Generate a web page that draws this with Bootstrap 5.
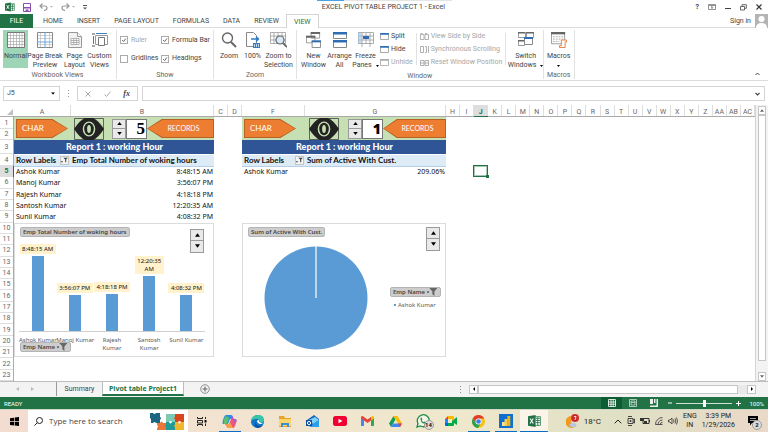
<!DOCTYPE html>
<html lang="en">
<head>
<meta charset="utf-8">
<meta name="viewport" content="width=device-width, initial-scale=1">
<title>EXCEL PIVOT TABLE PROJECT 1 - Excel</title>
<link href="https://cdn.jsdelivr.net/npm/bootstrap@5.3.0/dist/css/bootstrap.min.css" rel="stylesheet">
<style>
:root{--xl:#217346;--line:#d4d4d4;--cols:57px 143px 14px 14px 63px 141px repeat(22,minmax(0,1fr));--rows:12px 11px 14px 12px repeat(19,minmax(0,1fr))}
body{font:7px/9px Roboto,"Open Sans",sans-serif;color:#444;background:#fff;overflow:hidden}
svg{display:block;flex:none}
button,input{font:inherit;color:inherit}
button{border:0;background:none;padding:0}
a{color:inherit;text-decoration:none}
/* title bar and tabs */
.titlebar{height:14px;position:relative;padding:0 6px 0 5px}
.topstrip{position:absolute;top:0;left:317px;width:135px;height:1px;background:linear-gradient(90deg,#4aa0e6 27px,#e4e4e4 27px)}
.doctitle{padding-right:16px}
.wincaps{gap:9px}
.tabrow{height:14px;box-shadow:inset 0 -1px #dcdcdc}
.rtab{padding:0 7px;line-height:14px;height:14px}
.rtab.file-tab{background:var(--xl);color:#fff;width:33px;padding:0;text-align:center;margin-right:3px}
.rtab.on{color:var(--xl);border:1px solid var(--line);border-bottom:0;background:#fff;padding:0 7px}
.avatar{width:13px;height:14px;background:#b4b4b4}
/* ribbon */
.ribbon{height:53px;border-bottom:1px solid #dcdcdc;padding:2px 0 0 3px}
.rgroup{border-right:1px solid #e2e2e2;height:49px}
.rgroup .glabel{color:#666;height:9px;margin-top:3px;text-align:center}
.rbtn{display:flex;flex-direction:column;align-items:center;height:38px;padding-top:2px;white-space:nowrap}
.rbtn svg{margin-bottom:4px}
.rbtn.on{background:#9fd5b7}
.w22{width:22px}.w25{width:25px}.w27{width:27px}.w30{width:30px}.w34{width:34px}
.off{color:#a6a6a6}
.chk{display:flex;align-items:center;gap:3px;height:18px;white-space:nowrap}
.chk input{appearance:none;width:8px;height:8px;border:1px solid #ababab;margin:0;background:#fff;flex:none}
.chk input:checked{background:url("data:image/svg+xml,%3Csvg xmlns='http://www.w3.org/2000/svg' viewBox='0 0 8 8'%3E%3Cpath d='M1.5 4l2 2 3-4' fill='none' stroke='%23555' stroke-width='1.2'/%3E%3C/svg%3E")}
.showgrid{display:grid;grid-template-columns:41px 48px;padding:1px 4px 0 3px;height:38px}
.smallbtn{display:flex;align-items:center;gap:2px;height:13px;white-space:nowrap}
.smallset{padding-left:2px}
.vsep{width:1px;height:32px;background:#e2e2e2;margin:3px 3px 0}
.winrow .off .smallbtn{width:82px}
/* formula bar */
.fbar{padding:5px 3px 4px}
.fbox{height:15px;border:1px solid var(--line);background:#fff}
.namebox{width:57px}
.namebox input,.finput input{border:0;padding:0 3px;width:100%;min-width:0;outline:0;background:none}
.fxbox{width:61px;padding:0 7px}
.fxbtn{font-family:"Liberation Serif",serif;font-size:8px}
/* worksheet */
.sheet{display:grid;grid-template:12px minmax(0,1fr)/14px minmax(0,1fr)}
.corner{border-bottom:1px solid #ababab;position:relative}
.corner svg{margin:4px 0 0 7px}
.colheads{display:grid;grid-template-columns:var(--cols);border-bottom:1px solid #ababab}
.colheads span{border-right:1px solid #dedede;text-align:center;line-height:14px;height:11px;color:#666}
.rowheads{display:grid;grid-template-rows:var(--rows);border-right:1px solid #ababab}
.rowheads span{border-bottom:1px solid #dedede;display:flex;align-items:center;justify-content:center;color:#666;min-height:0;line-height:10px}
.colheads .cur{background:#dedede;color:var(--xl);font-weight:700;box-shadow:0 1px var(--xl)}
.rowheads .cur{background:#dedede;color:var(--xl);font-weight:700;box-shadow:1px 0 var(--xl)}
.cells{display:grid;grid-template-columns:var(--cols);grid-template-rows:var(--rows);font-family:"Noto Sans","Open Sans",sans-serif;color:#111}
.at-a{grid-column:1/3}.at-f{grid-column:5/7}
.banner{grid-row:1/3;background:#c6e0b4;padding:1px 0 1px 2px}
.arrow{position:relative;isolation:isolate;height:19px;background:#b86125;color:#fff;font-family:Lato,sans-serif;font-size:8px;line-height:17px}
.arrow::before{content:"";position:absolute;inset:1px;background:#ed7d31;z-index:-1}
.arrow.right,.arrow.right::before{clip-path:polygon(0 0,70% 0,100% 50%,70% 100%,0 100%)}
.arrow.left,.arrow.left::before{clip-path:polygon(22% 0,100% 0,100% 100%,22% 100%,0 50%)}
.arrow.right{width:52px;text-align:left;padding-left:6px}
.arrow.left{flex:1;padding-left:6px;font-size:7px}
.eye{margin:0 8px 0 6px}
.eye.far{margin:0 9px 0 13px}
.spin{width:14px;height:20px;display:flex;flex-direction:column;border:1px solid #9a9a9a;background:#e9e9e9;flex:none}
.spin button{flex:1;display:flex;align-items:center;justify-content:center}
.spin button+button{border-top:1px solid #9a9a9a}
.spin.tall{height:24px}
.spin.low{margin-top:2px}
.numbox{width:21px;height:20px;background:#fff;border:1px solid #777;color:#000;text-align:right;font-weight:900;line-height:18px;padding-right:1px}
.serif5{font-family:"Liberation Serif",serif;font-size:17px}
.sans1{font-size:14px;font-family:"Open Sans",sans-serif;font-weight:800}
.pivot{border-collapse:collapse;width:100%;height:100%;table-layout:fixed;font-size:7px;line-height:10px}
.pivot th,.pivot td{padding:0 1px 0 2px;white-space:nowrap;vertical-align:middle}
.pivot .cap th{background:#2f5597;color:#fff;height:14px;text-align:center;font:900 9px/11px Lato,sans-serif;border-bottom:1px solid #fff}
.pivot .hd th{background:#ddebf7;height:12px;border-bottom:1px solid #b4cfe8;font:700 8px/10px Lato,sans-serif;padding-right:0}
.pivot td:last-child{text-align:right}
.filt{width:9px;height:9px;background:#f4f4f4;border:1px solid #c4c4c4;display:flex;align-items:center;justify-content:center}
.c46{width:46px}.c53{width:53px}.c10{width:10px}
.rows-a{grid-row:3/10}.rows-f{grid-row:3/6}
.chart{grid-row:10/22;margin:0 0 1px;border:1px solid #dcdcdc;background:#fff;position:relative;display:grid;grid-template:minmax(0,1fr)/minmax(0,1fr)}
.chart>.top,.chart>.plot{grid-area:1/1}
.top{z-index:1;padding:3px 9px 0 5px;align-self:start}
.top.pietop{padding-right:5px}
.pill{background:#cdcdcd;border:1px solid #b4b4b4;border-radius:2px;font-size:6px;line-height:8px;height:10px;padding:0 2px;color:#444;font-weight:600;white-space:nowrap;display:flex;align-items:center}
.empname{position:absolute;left:5px;bottom:4px;z-index:2;width:51px}
.plot{display:grid;grid-template-columns:repeat(5,minmax(0,1fr));padding:0 8px 0 4px;font-size:6px;line-height:8px;text-align:center}
.series{display:flex;flex-direction:column;align-items:center;justify-content:flex-end;min-height:0}
.dlabel{background:#fff2cc;width:36px;padding:1px 0;margin-bottom:2px;white-space:nowrap}
.dlabel.two{width:29px}
.bar{width:12px;background:#5b9bd5;flex:none}
.cat{border-top:1px solid #d0d0d0;width:100%;height:25px;padding-top:4px;color:#595959;white-space:nowrap}
.pieplot{grid-area:1/1;padding:22px 4px 0 21px}
.keys{padding-top:41px;width:51px;font-size:6px;color:#595959;white-space:nowrap}
.active-cell{grid-column:9;grid-row:5;border:1px solid var(--xl);outline:1px solid #21734666;outline-offset:-2px;position:relative;margin:-1px 0 0 -1px}
.active-cell::after{content:"";position:absolute;right:-2px;bottom:-2px;width:3px;height:3px;background:var(--xl)}
/* scrollbars, sheet tabs, status */
.vscroll{width:13px;padding:1px 2px 0 2px;border-left:1px solid var(--line);background:#f3f3f3}
.sbtn{border:1px solid #c6c6c6;background:#fff;display:flex;align-items:center;justify-content:center;height:9px;flex:none}
.thumb{border:1px solid #c6c6c6;background:#fff}
.vtrack{height:11px;flex:none}
.square{width:9px}
.htrack{width:9px;height:9px;background:#e9e9e9}
.tabbar{height:16px;background:#f3f3f3;border-top:1px solid #bdbdbd;padding-right:12px}
.stab{line-height:14px;height:14px}
.tabarrows{width:56px;gap:12px;padding-right:7px}
.stab.sum{width:46px;border-left:1px solid #999;text-align:center}
.stab.on{background:#fff;border:1px solid #bdbdbd;border-top:0;border-bottom:2px solid var(--xl);color:var(--xl);font-family:"Noto Sans",sans-serif;font-weight:700;width:82px;text-align:center;white-space:nowrap}
.hscroll{width:296px}
.statusbar{height:12px;background:var(--xl);color:#fff;font-size:6px}
.vbtn{width:21px;height:12px;display:flex;align-items:center;justify-content:center}
.vbtn.on{background:#0e5c33}
.zoomer{appearance:none;width:56px;height:8px;background:linear-gradient(#cfe2d7,#cfe2d7) center/100% 1px no-repeat}
.zoomer::-webkit-slider-thumb{appearance:none;width:3px;height:7px;background:#fff}
/* taskbar */
.taskbar{height:23px;background:linear-gradient(90deg,#f3dcd0 0,#f2e3d0 30%,#efe8cc 60%,#dfe0c4 80%,#ead9c8 100%);color:#222;border-top:1px solid #cfd8c6}
.startbtn{width:28px}
.search{width:160px;background:#fff;padding-left:6px;gap:6px}
.search input{border:0;width:82px;padding:0;font:8px/12px "Open Sans",sans-serif;outline:0;background:none}
.search input::placeholder{color:#444;opacity:1}
.apps{display:grid;grid-template-columns:repeat(13,minmax(0,1fr));width:360px}
.apps button{display:flex;align-items:center;justify-content:center;position:relative;height:22px}
.apps .open{background:linear-gradient(#0a6cc4,#0a6cc4) bottom/22px 1px no-repeat}
.apps .front{background:linear-gradient(#0a6cc4,#0a6cc4) bottom/100% 1px no-repeat #faf5e8}
.count{position:absolute;left:14px;top:10px;min-width:10px;height:10px;border-radius:5px;background:#ddd;border:1px solid #999;line-height:8px;font-size:6px;font-weight:700;text-align:center;color:#111}
.note{margin:0 4px 0 8px}
.note .count{left:4px;top:4px}
.tray{gap:5px;line-height:9px;text-align:center;padding-right:6px}
.temp{font-size:8px;margin-right:8px}
</style>
</head>
<body class="d-flex flex-column vh-100">
<svg width="0" height="0" class="position-absolute" aria-hidden="true">
<defs>
<symbol id="up" viewBox="0 0 6 4"><path d="M0 4L3 0l3 4z"/></symbol>
<symbol id="dn" viewBox="0 0 6 4"><path d="M0 0h6L3 4z"/></symbol>
<symbol id="eye" viewBox="0 0 30 22"><path d="M.5.5h29v21H.5z" fill="none" stroke="#444" stroke-width=".8"/><path d="M0 11Q6 2 11 0h8q5 2 11 11-6 9-11 11h-8Q6 20 0 11z" fill="#222"/><ellipse cx="15" cy="11" rx="6.3" ry="7.6" fill="#c6e0b4"/><ellipse cx="15" cy="11" rx="4.8" ry="6.2" fill="#222"/><ellipse cx="15" cy="11" rx="1.900" ry="4" fill="#c6e0b4"/></symbol>
<symbol id="funnel" viewBox="0 0 12 9"><path d="M0 4h3L1.500 6z" fill="#333"/><path d="M3 0h9L8.700 4v5L6.400 7V4z" fill="#666"/></symbol>
<symbol id="minifunnel" viewBox="0 0 8 7"><path d="M0 5h2v1H0z" fill="#333"/><path d="M2.500 1H8L6 3v3H4.800V3z" fill="#444"/></symbol>
<symbol id="win" viewBox="0 0 10 8"><path d="M.5.5h9v7h-9z" fill="#fff" stroke="#999"/><path d="M0 0h10v2H0z" fill="#2f6eb5"/></symbol>
<symbol id="xl" viewBox="0 0 12 11"><path d="M6 1.500h5.500v8H6z" fill="#fff" stroke="#217346" stroke-width=".7"/><path d="M7 3h4M7 5h4M7 7h4M9 2v8" stroke="#217346" stroke-width=".8"/><path d="M0 1.200L7 0v11L0 9.800z" fill="#217346"/><path d="M1.900 3.200l3 4.600M4.900 3.200l-3 4.600" stroke="#fff" stroke-width="1"/></symbol>
</defs></svg>

<header>
<div class="titlebar d-flex align-items-center">
<div class="topstrip"></div>
<svg width="10" height="10"><use href="#xl"/></svg>
<button class="ms-2" aria-label="Save"><svg width="8" height="9" viewBox="0 0 8 9"><path d="M.5.5h7v8h-7z" fill="#fff" stroke="#8a4fb0"/><path d="M1 4h6v1.500H1zM2.500 6.500h3V9h-3z" fill="#8a4fb0"/></svg></button>
<button class="ms-2" aria-label="Undo"><svg width="14" height="8" viewBox="0 0 14 8"><path d="M3.500.5L1 3l2.500 2.500M1 3h4.500Q8 3 8 5T5 7.500" fill="none" stroke="#999" stroke-width="1.200"/><path d="M11 3h3l-1.500 1.500z" fill="#aaa"/></svg></button>
<button class="ms-2" aria-label="Redo"><svg width="14" height="8" viewBox="0 0 14 8"><path d="M5.500.5L8 3 5.500 5.500M8 3H3.500Q1 3 1 5t3 2.500" fill="none" stroke="#999" stroke-width="1.200"/><path d="M11 3h3l-1.500 1.500z" fill="#aaa"/></svg></button>
<button class="ms-2" aria-label="Customize"><svg width="4" height="5" viewBox="0 0 4 5"><path d="M0 0h4v1H0zM0 2.500h4L2 4.500z" fill="#555"/></svg></button>
<div class="doctitle flex-grow-1 text-center">EXCEL PIVOT TABLE PROJECT 1 - Excel</div>
<div class="wincaps d-flex align-items-center">
<button aria-label="Help" class="fw-bold">?</button>
<button aria-label="Ribbon options"><svg width="8" height="6" viewBox="0 0 8 6"><path d="M.5.5h7v5h-7zM.5 1.500h7M4 5V2.500M2.800 3.700L4 2.500l1.200 1.200" fill="none" stroke="#666" stroke-width=".7"/></svg></button>
<button aria-label="Minimize"><svg width="6" height="6"><path d="M0 4h6v1H0z" fill="#444"/></svg></button>
<button aria-label="Restore"><svg width="7" height="7" viewBox="0 0 7 7"><path d="M.5 2.500h4v3.500h-4zM2 2V.7h4.300v3.600H5" fill="none" stroke="#555" stroke-width=".9"/></svg></button>
<button aria-label="Close"><svg width="6" height="6" viewBox="0 0 6 6"><path d="M.5.5l5 5M5.500.5l-5 5" stroke="#333" stroke-width="1.100"/></svg></button>
</div>
</div>
<nav class="tabrow d-flex">
<a href="#" class="rtab file-tab">FILE</a><a href="#" class="rtab">HOME</a><a href="#" class="rtab">INSERT</a><a href="#" class="rtab">PAGE LAYOUT</a><a href="#" class="rtab">FORMULAS</a><a href="#" class="rtab">DATA</a><a href="#" class="rtab">REVIEW</a><a href="#" class="rtab on">VIEW</a>
<a href="#" class="rtab ms-auto pe-1">Sign in</a>
<span class="avatar"><svg width="13" height="14" viewBox="0 0 13 14"><circle cx="6.500" cy="5" r="3" fill="#fff"/><path d="M1 14q0-5 5.500-5t5.500 5z" fill="#fff"/></svg></span>
</nav>
</header>

<section class="ribbon d-flex">
<div class="rgroup pe-1">
<div class="d-flex">
<button class="rbtn on w25"><svg width="18" height="16" viewBox="0 0 18 16"><path d="M.5.5h17v15H.5z" fill="#fff" stroke="#777"/><path d="M3.500 1v14M6.500 1v14M9.500 1v14M12.500 1v14M15 1v14M1 3.500h16M1 6.500h16M1 9.500h16M1 12.500h16" stroke="#aaa" stroke-width=".7"/></svg>Normal</button>
<button class="rbtn w34"><svg width="16" height="16" viewBox="0 0 16 16"><path d="M.5.5h15v15H.5z" fill="#fff" stroke="#888"/><path d="M3.500 1v14M12.500 1v14M1 3.500h14M1 6.500h14M1 12.500h14" stroke="#bbb" stroke-width=".7"/><path d="M8 0v16M0 10h16" stroke="#6ba6dc"/></svg>Page Break<br>Preview</button>
<button class="rbtn w25"><svg width="14" height="16" viewBox="0 0 14 16"><path d="M.5.5h9l4 4v11H.5z" fill="#f2f2f2" stroke="#999"/><path d="M9.500.5v4h4" fill="#fff" stroke="#999"/><path d="M3 6.500h8v6H3zM3 8.500h8M3 10.500h8M5.700 6.500v6M8.400 6.500v6" fill="#fff" stroke="#999" stroke-width=".7"/></svg>Page<br>Layout</button>
<button class="rbtn w25"><svg width="16" height="16" viewBox="0 0 16 16"><path d="M3.500 3.500h12v9h-12z" fill="#fff" stroke="#999"/><path d="M4 1.500h11M1.500 4v8" stroke="#3b7fc4" stroke-width="1"/><path d="M6.500 5.500h6v8h-6z" fill="#fff" stroke="#777"/><path d="M0 1h3v2H0zM0 13h3v2H0z" fill="#aaa"/></svg>Custom<br>Views</button>
</div>
<div class="glabel">Workbook Views</div>
</div>
<div class="rgroup">
<div class="showgrid">
<label class="chk off"><input type="checkbox" checked disabled>Ruler</label>
<label class="chk"><input type="checkbox" checked>Formula Bar</label>
<label class="chk"><input type="checkbox">Gridlines</label>
<label class="chk"><input type="checkbox" checked>Headings</label>
</div>
<div class="glabel">Show</div>
</div>
<div class="rgroup px-1">
<div class="d-flex">
<button class="rbtn w22"><svg width="16" height="16" viewBox="0 0 16 16"><circle cx="6.500" cy="6" r="5" fill="#fff" stroke="#666" stroke-width="1.400"/><path d="M10 10l5 5" stroke="#666" stroke-width="2"/></svg>Zoom</button>
<button class="rbtn w25"><svg width="14" height="16" viewBox="0 0 14 16"><path d="M.5.5h7l3 3v11H.5z" fill="#fff" stroke="#888"/><path d="M5 7h7M10 4.500L12.500 7 10 9.500" fill="none" stroke="#2f7ecb" stroke-width="1.400"/><path d="M7 11h7v5H7z" fill="#2f7ecb"/><path d="M8.500 12v3M10.500 12v3M12.500 12v3" stroke="#fff" stroke-width=".7"/></svg>100%</button>
<button class="rbtn w27"><svg width="17" height="16" viewBox="0 0 17 16"><path d="M.5.500h15v11H.5zM4 1v11M8 1v11M12 1v11M1 4h15M1 8h15" fill="none" stroke="#999" stroke-width=".8"/><circle cx="10" cy="8" r="4" fill="#d8eafa" stroke="#666" stroke-width="1.200"/><path d="M13 11l4 4" stroke="#666" stroke-width="1.800"/></svg>Zoom to<br>Selection</button>
</div>
<div class="glabel">Zoom</div>
</div>
<div class="rgroup">
<div class="winrow d-flex ps-1">
<button class="rbtn w25"><svg width="15" height="16" viewBox="0 0 16 17"><path d="M5.500.5h9v6h-9zM.5 4.500h9v7h-9z" fill="#fff" stroke="#999"/><path d="M5 0h10v2H5zM0 4h10v2H0z" fill="#666"/><path d="M6.500 9.500h9v7h-9z" fill="#fff" stroke="#888"/><path d="M6 9h10v2H6z" fill="#2f6eb5"/></svg>New<br>Window</button>
<button class="rbtn w27"><svg width="14" height="16" viewBox="0 0 14 16"><path d="M.5.5h13v6H.5zM.5 8.500h13v7H.5z" fill="#fff" stroke="#888"/><path d="M0 0h14v2.500H0zM0 8h14v2.500H0z" fill="#2f6eb5"/></svg>Arrange<br>All</button>
<button class="rbtn w25"><svg width="16" height="16" viewBox="0 0 16 16"><path d="M.5.5h15v11H.5zM4 1v14M8 1v11M12 1v14M1 4h15M1 8h15" fill="#fff" stroke="#999" stroke-width=".8"/><path d="M5 4h6v3H5z" fill="#2f6eb5"/><path d="M0 1h4v10H0z" fill="#9dc6ea" opacity=".6"/></svg>Freeze<span class="d-flex align-items-center">Panes<svg class="ms-1 mb-0" width="3" height="2"><use href="#dn"/></svg></span></button>
<div class="smallset">
<button class="smallbtn"><svg width="9" height="7"><use href="#win"/></svg>Split</button>
<button class="smallbtn"><svg width="9" height="7"><use href="#win"/></svg>Hide</button>
<button class="smallbtn off"><svg width="9" height="7" viewBox="0 0 10 8"><path d="M.5.5h9v7h-9z" fill="#fff" stroke="#aaa"/><path d="M0 0h10v2H0z" fill="#aaa"/></svg>Unhide</button>
</div>
<div class="vsep"></div>
<div class="off">
<button class="smallbtn"><svg width="9" height="7" viewBox="0 0 9 7"><path d="M.5 1.500h3.500v5H.5zM5 1.500h3.500v5H5zM.5.500h2M5 .5h2" fill="#fff" stroke="#b0b0b0"/></svg>View Side by Side</button>
<button class="smallbtn"><svg width="9" height="7" viewBox="0 0 9 7"><path d="M.5.5h3v6h-3zM5 .5h1.500v6H5M8.500 0v7" fill="#fff" stroke="#b0b0b0"/></svg>Synchronous Scrolling</button>
<button class="smallbtn"><svg width="9" height="7" viewBox="0 0 9 7"><path d="M.5 1.500h3.500v5H.5zM5 1.500h3.500v5H5zM1 4h7" fill="#fff" stroke="#b0b0b0"/></svg>Reset Window Position</button>
</div>
<div class="vsep"></div>
<button class="rbtn w34"><svg width="16" height="16" viewBox="0 0 16 16"><path d="M.5.5h7v5h-7zM8.500.5h7v5h-7zM.5 8.500h6v5h-6z" fill="#fff" stroke="#999"/><path d="M0 0h7v1.500H0zM8 0h8v1.500H8zM0 8h6v1.500H0z" fill="#666"/><path d="M6.500 5.500h8v7h-8z" fill="#fff" stroke="#888"/><path d="M6 5h9v2H6z" fill="#2f6eb5"/></svg>Switch<span class="d-flex align-items-center">Windows<svg class="ms-1 mb-0" width="3" height="2"><use href="#dn"/></svg></span></button>
</div>
<div class="glabel">Window</div>
</div>
<div class="rgroup">
<button class="rbtn w30"><svg width="16" height="16" viewBox="0 0 17 17"><path d="M.5.5h14v12H.5z" fill="#fff" stroke="#999"/><path d="M0 0h15v2.500H0z" fill="#666"/><path d="M2 5h11M2 7.500h11M2 10h7" stroke="#aaa" stroke-dasharray="2 1"/><path d="M11 8.500h5.500v2H15v6H9v-2h2z" fill="#fff" stroke="#ed7d31"/></svg>Macros<svg class="mt-1 mb-0" width="3" height="2"><use href="#dn"/></svg></button>
<div class="glabel">Macros</div>
</div>
<button class="ms-auto align-self-end me-1 pe-1 pb-1" aria-label="Collapse ribbon"><svg width="5" height="4" viewBox="0 0 5 4"><path d="M.5 3l2-2 2 2" fill="none" stroke="#444"/></svg></button>
</section>

<section class="fbar d-flex align-items-center">
<div class="fbox namebox d-flex align-items-center pe-1"><input aria-label="Name box" value="J5"><svg width="4" height="3" viewBox="0 0 6 4"><use href="#dn"/></svg></div>
<svg width="17" height="9" viewBox="0 0 17 9"><path d="M8 1h1v1H8zM8 4h1v1H8zM8 7h1v1H8z" fill="#999"/></svg>
<div class="fbox fxbox d-flex align-items-center justify-content-between">
<svg width="6" height="6" viewBox="0 0 6 6"><path d="M.5.5l5 5M5.500.5l-5 5" stroke="#aaa"/></svg>
<svg width="7" height="6" viewBox="0 0 7 6"><path d="M.5 3.500l2 2 4-5" fill="none" stroke="#aaa"/></svg>
<button class="fxbtn fst-italic fw-bold" aria-label="Insert function">fx</button>
</div>
<div class="fbox finput flex-grow-1 d-flex align-items-center pe-1 ms-1"><input aria-label="Formula"><svg width="5" height="4" viewBox="0 0 5 4"><path d="M.5 1l2 2 2-2" fill="none" stroke="#444" stroke-width="1.200"/></svg></div>
</section>

<main class="d-flex flex-grow-1 overflow-hidden">
<div class="sheet flex-grow-1">
<div class="corner"><svg width="6" height="6"><path d="M6 0v6H0z" fill="#c0c0c0"/></svg></div>
<div class="colheads"><span>A</span><span>B</span><span>C</span><span>D</span><span>F</span><span>G</span><span>H</span><span>I</span><span class="cur">J</span><span>K</span><span>L</span><span>M</span><span>N</span><span>O</span><span>P</span><span>Q</span><span>R</span><span>S</span><span>T</span><span>U</span><span>V</span><span>W</span><span>X</span><span>Y</span><span>Z</span><span>AA</span><span>AB</span><span>AC</span></div>
<div class="rowheads"><span>1</span><span>2</span><span>3</span><span>4</span><span class="cur">5</span><span>6</span><span>7</span><span>8</span><span>9</span><span>10</span><span>11</span><span>12</span><span>13</span><span>14</span><span>15</span><span>16</span><span>17</span><span>18</span><span>19</span><span>20</span><span>21</span><span>22</span><span>23</span></div>
<div class="cells">
<div class="banner at-a d-flex align-items-center">
<button class="arrow right">CHAR</button>
<svg class="eye" width="30" height="22"><use href="#eye"/></svg>
<div class="spin"><button aria-label="Up"><svg width="5" height="3"><use href="#up"/></svg></button><button aria-label="Down"><svg width="5" height="3"><use href="#dn"/></svg></button></div>
<div class="numbox serif5">5</div>
<button class="arrow left">RECORDS</button>
</div>
<div class="banner at-f d-flex align-items-center">
<button class="arrow right">CHAR</button>
<svg class="eye far" width="30" height="22"><use href="#eye"/></svg>
<div class="spin"><button aria-label="Up"><svg width="5" height="3"><use href="#up"/></svg></button><button aria-label="Down"><svg width="5" height="3"><use href="#dn"/></svg></button></div>
<div class="numbox sans1">1</div>
<button class="arrow left">RECORDS</button>
</div>
<div class="at-a rows-a">
<table class="pivot">
<colgroup><col class="c46"><col class="c10"><col></colgroup>
<thead><tr class="cap"><th colspan="3">Report 1 : working Hour</th></tr>
<tr class="hd"><th>Row Labels</th><th class="p-0"><button class="filt" aria-label="Filter rows"><svg width="7" height="6"><use href="#minifunnel"/></svg></button></th><th>Emp Total Number of woking hours</th></tr></thead>
<tbody><tr><td colspan="2">Ashok Kumar</td><td>8:48:15 AM</td></tr><tr><td colspan="2">Manoj Kumar</td><td>3:56:07 PM</td></tr><tr><td colspan="2">Rajesh Kumar</td><td>4:18:18 PM</td></tr><tr><td colspan="2">Santosh Kumar</td><td>12:20:35 AM</td></tr><tr><td colspan="2">Sunil Kumar</td><td>4:08:32 PM</td></tr></tbody>
</table>
</div>
<div class="at-f rows-f">
<table class="pivot">
<colgroup><col class="c53"><col class="c10"><col></colgroup>
<thead><tr class="cap"><th colspan="3">Report 1 : working Hour</th></tr>
<tr class="hd"><th>Row Labels</th><th class="p-0"><button class="filt" aria-label="Filter rows"><svg width="7" height="6"><use href="#minifunnel"/></svg></button></th><th>Sum of Active With Cust.</th></tr></thead>
<tbody><tr><td colspan="2">Ashok Kumar</td><td>209.06%</td></tr></tbody>
</table>
</div>
<div class="active-cell"></div>
<figure class="chart at-a">
<div class="top d-flex justify-content-between align-items-start"><button class="pill">Emp Total Number of woking hours</button>
<div class="spin tall low"><button aria-label="Up"><svg width="5" height="4"><use href="#up"/></svg></button><button aria-label="Down"><svg width="5" height="4"><use href="#dn"/></svg></button></div></div>
<div class="plot">
<div class="series"><span class="dlabel">8:48:15 AM</span><span class="bar" style="height:75px"></span><span class="cat">Ashok Kumar</span></div>
<div class="series"><span class="dlabel">3:56:07 PM</span><span class="bar" style="height:36px"></span><span class="cat">Manoj Kumar</span></div>
<div class="series"><span class="dlabel">4:18:18 PM</span><span class="bar" style="height:37px"></span><span class="cat">Rajesh<br>Kumar</span></div>
<div class="series"><span class="dlabel two">12:20:35<br>AM</span><span class="bar" style="height:55px"></span><span class="cat">Santosh<br>Kumar</span></div>
<div class="series"><span class="dlabel">4:08:32 PM</span><span class="bar" style="height:36px"></span><span class="cat">Sunil Kumar</span></div>
</div>
<button class="pill empname justify-content-between">Emp Name <svg width="12" height="8"><use href="#funnel"/></svg></button>
</figure>
<figure class="chart at-f">
<div class="top pietop d-flex justify-content-between align-items-start"><button class="pill">Sum of Active With Cust.</button>
<div class="spin tall"><button aria-label="Up"><svg width="5" height="4"><use href="#up"/></svg></button><button aria-label="Down"><svg width="5" height="4"><use href="#dn"/></svg></button></div></div>
<div class="pieplot d-flex justify-content-between">
<svg width="104" height="104" viewBox="0 0 104 104"><circle cx="52" cy="52" r="51.500" fill="#5b9bd5"/><path d="M52 0v52" stroke="#fff" stroke-width="1.200"/></svg>
<div class="keys"><button class="pill w-100 justify-content-between">Emp Name <svg width="12" height="8"><use href="#funnel"/></svg></button><div class="d-flex align-items-center mt-1 ps-1"><svg width="4" height="2"><path d="M0 0h2v2H0z" fill="#5b9bd5"/></svg>Ashok Kumar</div></div>
</div>
</figure>
</div>
</div>
<div class="vscroll d-flex flex-column">
<button class="sbtn" aria-label="Scroll up"><svg width="4" height="3" fill="#666"><use href="#up"/></svg></button>
<div class="thumb flex-grow-1"></div>
<div class="vtrack"></div>
<button class="sbtn" aria-label="Scroll down"><svg width="4" height="3" fill="#666"><use href="#dn"/></svg></button>
</div>
</main>

<nav class="tabbar d-flex align-items-start">
<div class="d-flex align-items-center justify-content-center stab tabarrows"><svg width="3" height="4"><path d="M3 0v4L0 2z" fill="#bbb"/></svg><svg width="3" height="4"><path d="M0 0v4l3-2z" fill="#bbb"/></svg></div>
<a href="#" class="stab sum">Summary</a>
<a href="#" class="stab on">Pivot table Project1</a>
<button class="stab d-flex align-items-center ms-3" aria-label="New sheet"><svg width="10" height="10" viewBox="0 0 10 10"><circle cx="5" cy="5" r="4.300" fill="none" stroke="#777" stroke-width=".8"/><path d="M2.500 5h5M5 2.500v5" stroke="#666" stroke-width="1.100"/></svg></button>
<div class="d-flex align-items-center ms-auto stab hscroll"><svg width="9" height="7"><path d="M0 0h1v1H0zM0 3h1v1H0zM0 6h1v1H0z" fill="#888"/></svg>
<button class="sbtn square" aria-label="Scroll left"><svg width="2" height="4"><path d="M2 0v4L0 2z"/></svg></button><div class="thumb flex-grow-1 sbtn"></div><div class="htrack"></div><button class="sbtn square" aria-label="Scroll right"><svg width="2" height="4"><path d="M0 0v4l2-2z"/></svg></button></div>
</nav>

<footer>
<div class="statusbar d-flex align-items-center ps-1 pe-1">
<span>READY</span>
<div class="d-flex align-items-center ms-auto">
<button class="vbtn on" aria-label="Normal view"><svg width="8" height="8" viewBox="0 0 8 8"><path d="M.5.5h7v7h-7zM3 0v8M5.200 0v8M0 3h8M0 5.200h8" fill="none" stroke="#fff" stroke-width=".8"/></svg></button>
<button class="vbtn" aria-label="Page layout view"><svg width="8" height="8" viewBox="0 0 8 8"><path d="M.5.5h7v7h-7zM2 2h4v4H2zM2 3.500h4" fill="none" stroke="#cfe2d7" stroke-width=".8"/></svg></button>
<button class="vbtn" aria-label="Page break view"><svg width="8" height="8" viewBox="0 0 8 8"><path d="M0 0h3v5H0zM4 0h1.500v4H4zM6.500 0H8v8H0V6.500h6.500z" fill="#e8f2ec"/></svg></button>
<button class="mx-1" aria-label="Zoom out"><svg width="4" height="4"><path d="M0 1.500h4v1H0z" fill="#fff"/></svg></button><input class="zoomer" type="range" aria-label="Zoom" value="50"><button class="ms-1 me-2" aria-label="Zoom in"><svg width="5" height="5"><path d="M0 2h5v1H0zM2 0h1v5H2z" fill="#fff"/></svg></button><span>100%</span></div>
</div>
<div class="taskbar d-flex align-items-stretch">
<button class="startbtn d-flex align-items-center justify-content-center" aria-label="Start"><svg width="9" height="9" viewBox="0 0 9 9"><path d="M0 1.200L4 .7v3.500H0zM4.700.600L9 0v4.200H4.700zM0 4.900h4v3.500L0 7.900zM4.700 4.900H9V9l-4.300-.6z"/></svg></button>
<div class="search d-flex align-items-center"><svg width="9" height="9" viewBox="0 0 9 9"><circle cx="5.500" cy="3.500" r="3" fill="none" stroke="#222"/><path d="M3.300 5.700L.4 8.600" stroke="#222"/></svg><input aria-label="Search" placeholder="Type here to search">
<svg class="ms-auto me-1" width="34" height="19" viewBox="0 0 34 19"><path d="M0 1h3q1.500 2 3 0h4v4q2 1 0 3v3H6q-1.500-2-3 0H1V7q-2-1-1-2z" fill="#1b6580"/><path d="M16 2h9v8h-3q-1.500-2-3 0h-3z" fill="#7cc9b4"/><path d="M25 2h9v8h-3q-1.500-2-3 0h-3V7q-2-1 0-2z" fill="#d9481c"/><path d="M7 11h3q1.500-3 3 0h3v7H7v-2q2-1 0-3z" fill="#e8783a"/><path d="M16 10h3q1.500 3 3 0h3v8h-9v-3q-2-1 0-2z" fill="#1f9a96"/><path d="M25 10h3q1.500 3 3 0h3v8h-9v-3q-2-1 0-2z" fill="#f2b62c"/></svg></div>
<div class="apps">
<button aria-label="Task view"><svg width="10" height="9" viewBox="0 0 10 9"><path d="M.5 0v1.500h5V0M.5 3.500h5v2.500h-5zM.5 9V7.500h5V9M8.500 0v2M8.500 6.500V9" fill="none" stroke="#222"/><path d="M7.500 3h2v2.500h-2z"/></svg></button>
<button class="open" aria-label="Copilot"><svg width="15" height="13" viewBox="0 0 15 13"><path d="M4 0h5q1 0 1.500 2l1 2H8L6 9Q5 12 3 9H1Q0 8 1 5l1-3Q3 0 4 0z" fill="#2a8fe0"/><path d="M4 1q-3 3-2 8h3l2-6z" fill="#5dbf6c"/><path d="M11 13H6q-1 0-1.500-2L4 9h3l2-5q1-3 3 0h2q1 1 0 4l-1 3q-1 2-2 2z" fill="#e8577e"/><path d="M4 9h3l1-2 3 6H6q-1 0-1.500-2z" fill="#f6a04a"/><path d="M9 0q2 0 2.500 4H14q1 1 0 4l-3-3z" fill="#a35be0"/></svg></button>
<button aria-label="Edge"><svg width="13" height="13" viewBox="0 0 13 13"><circle cx="6.500" cy="6.500" r="6.500" fill="#1275c8"/><path d="M0 6Q1 0 7 0q6 0 6 5 0 3-4 3H8q1-1 0-3-3-3-8 1z" fill="#38c6a8"/><path d="M5 6q-1 4 3 5 3 0 4-1-2 3-5 3-5-1-2-7z" fill="#0b4fa0"/><path d="M6 6q2-2 2 0t4 2q-3 2-5 0-1-1-1-2z" fill="#fff"/></svg></button>
<button aria-label="Explorer"><svg width="12" height="11" viewBox="0 0 12 11"><path d="M0 0h5l1 2h6v9H0z" fill="#e8a52c"/><path d="M0 3h12v7H0z" fill="#fcd66c"/><path d="M2 11V7h8v4H8V9H4v2z" fill="#3a8ddb"/></svg></button>
<button aria-label="Outlook"><svg width="13" height="12" viewBox="0 0 13 12"><path d="M1 5l7-5 5 4v7H3z" fill="#1a66c0"/><path d="M3 5l6-3 4 3-6 4z" fill="#7fd0f5"/><path d="M3 12l10-7v7z" fill="#2aa0ea"/><path d="M0 5h6v6H0z" fill="#124f9e"/><circle cx="3" cy="8" r="1.600" fill="none" stroke="#fff"/></svg></button>
<button aria-label="YouTube"><svg width="14" height="10" viewBox="0 0 14 10"><rect width="14" height="10" rx="2.500" fill="#f00030"/><path d="M5.500 2.800v4.400L9.500 5z" fill="#fff"/></svg></button>
<button aria-label="Gmail"><svg width="13" height="10" viewBox="0 0 13 10"><path d="M0 1v9h3V4z" fill="#4285f4"/><path d="M13 1v9h-3V4z" fill="#34a853"/><path d="M0 1q1-2 3 0l3.500 2.500L10 1v3.500L6.500 7 3 4.500 0 2z" fill="#ea4335"/><path d="M10 1q2-2 3 0v1.500l-3 2z" fill="#fbbc04"/></svg></button>
<button aria-label="Drive"><svg width="13" height="11" viewBox="0 0 13 11"><path d="M4.500 0L0 7.500 2 11l4.500-7.500z" fill="#0f9d58"/><path d="M4.500 0h4L13 7.500H9z" fill="#fbbc04"/><path d="M4 7.500h9L11 11H2z" fill="#4285f4"/><path d="M9 7.500h4L11 11z" fill="#ea4335"/></svg></button>
<button aria-label="WhatsApp"><svg width="14" height="14" viewBox="0 0 14 14"><path d="M1 13l1-3.500A6 6 0 1 1 4.500 12z" fill="#f4f4e4" stroke="#1d8a4a" stroke-width="1.300"/><path d="M4.500 4q1-1 1.500.5l.3 1-.6.700q.6 1.500 2 2l.9-.7 1.500.8q-.3 1.700-2 1.400Q4.500 9 4.500 4z" fill="#1d8a4a"/></svg><span class="count">14</span></button>
<button aria-label="Meet"><svg width="12" height="10" viewBox="0 0 12 10"><path d="M0 3l3-3v3z" fill="#ea4335"/><path d="M0 3h3v4H0z" fill="#2684fc"/><path d="M0 7h3v3H1q-1 0-1-1z" fill="#0066da"/><path d="M3 0h5q1 0 1 1v2L7 5V3H3z" fill="#ffba00"/><path d="M3 7h4V5l5-4v8L9 7v2q0 1-1 1H3z" fill="#00ac47"/></svg></button>
<button class="open" aria-label="Chrome"><svg width="13" height="13" viewBox="0 0 13 13"><circle cx="6.500" cy="6.500" r="6.500" fill="#fbc116"/><path d="M.9 3.200A6.500 6.500 0 0 1 12.200 3.400H6.500L3.800 8z" fill="#e33b2e"/><path d="M.9 3.200A6.500 6.500 0 0 0 6 13l3-5H3.800z" fill="#2f9e4f"/><circle cx="6.500" cy="6.500" r="3" fill="#fff"/><circle cx="6.500" cy="6.500" r="2.300" fill="#3b7ded"/></svg></button>
<button class="open" aria-label="Power BI"><svg width="14" height="14" viewBox="0 0 14 14"><path d="M0 0h14v14H0z" fill="#0f6fd0"/><path d="M3 8h3v4H3z" fill="#f7e09a"/><path d="M5.500 5h3v7h-3z" fill="#f3cf4c"/><path d="M8.300 2h3v10h-3z" fill="#e9b81e"/></svg></button>
<button class="front" aria-label="Excel"><svg width="13" height="12"><use href="#xl"/></svg></button>
</div>
<div class="tray d-flex align-items-center ms-auto">
<svg width="13" height="14" viewBox="0 0 13 14"><path d="M5 2a6 6 0 1 0 5 10Q4 11 5 2z" fill="#f29a1f"/><ellipse cx="7" cy="11" rx="3.500" ry="2" fill="#b7c6e2"/><circle cx="9" cy="4" r="4" fill="#cf2a2a"/><path d="M8 2.500h2L9 6" fill="none" stroke="#fff" stroke-width=".8"/></svg>
<span class="temp">18°C</span>
<svg width="8" height="5" viewBox="0 0 8 5"><path d="M.7 4.300L4 1l3.300 3.300" fill="none" stroke="#222"/></svg>
<svg width="8" height="10" viewBox="0 0 8 10"><path d="M1 2.500h5v5H1zM1 .5h4M1 9.500h4M6 4l1.500-1v4L6 6" fill="none" stroke="#333" stroke-width=".9"/><circle cx="3.500" cy="5" r="1" fill="#333"/></svg>
<svg width="10" height="8" viewBox="0 0 10 8"><path d="M3 1.500h6v5H3zM9.500 3v2" fill="none" stroke="#333"/><path d="M0 1h4v3H0zM4 4h3v2H4z" fill="#333"/></svg>
<svg width="8" height="8" viewBox="0 0 8 8"><path d="M.5 7.500A7 7 0 0 1 7.500.5M3 7.500A4.500 4.500 0 0 1 7.500 3M5.300 7.500A2.200 2.200 0 0 1 7.500 5.300M.5 7.500h7" fill="none" stroke="#444" stroke-width=".9"/></svg>
<svg width="10" height="8" viewBox="0 0 10 8"><path d="M.5 3v2H2l2 2V1L2 3zM5.500 2.500q1 1.500 0 3M7 1.500q1.600 2.500 0 5M8.500.5q2 3.500 0 7" fill="none" stroke="#333" stroke-width=".8"/></svg>
<span>ENG<br>IN</span><span>3:39 PM<br>1/29/2026</span>
<button class="note position-relative" aria-label="Notifications"><svg width="10" height="10" viewBox="0 0 10 10"><path d="M0 0h10v7H4L2 9.500V7H0z"/><path d="M2 2.500h6M2 4.500h6" stroke="#ddd" stroke-width=".7"/></svg><span class="count">2</span></button>
</div>
</div>
</footer>
<script src="https://cdn.jsdelivr.net/npm/bootstrap@5.3.0/dist/js/bootstrap.bundle.min.js"></script>
</body>
</html>
